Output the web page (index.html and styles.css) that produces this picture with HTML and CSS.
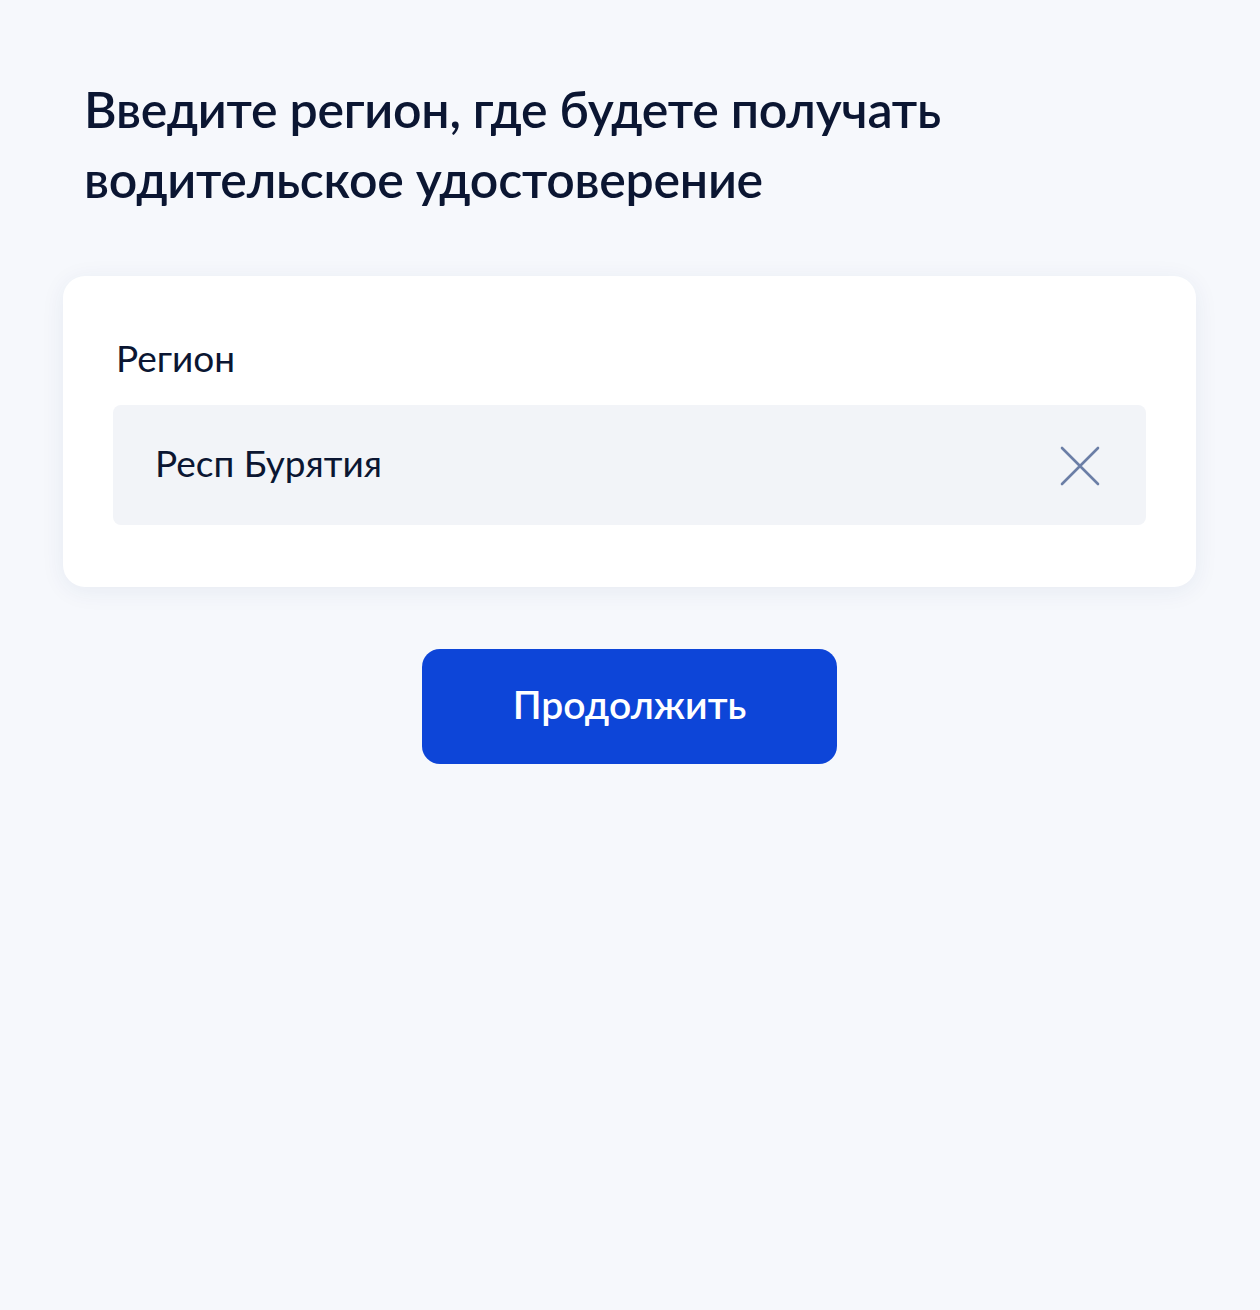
FILE: index.html
```html
<!DOCTYPE html>
<html lang="ru">
<head>
<meta charset="utf-8">
<link rel="stylesheet" href="styles.css">
</head>
<body>
<main class="page">
  <h1 class="title">Введите регион, где будете получать водительское удостоверение</h1>
  <section class="card">
    <div class="label">Регион</div>
    <div class="field">
      <span class="value">Респ Бурятия</span>
      <svg class="clear" width="40" height="40" viewBox="0 0 40 40" aria-hidden="true">
        <path d="M2 2 L38 38 M38 2 L2 38" stroke="#6b7ea6" stroke-width="2.6" stroke-linecap="round" fill="none"/>
      </svg>
    </div>
  </section>
  <div class="actions">
    <button class="btn">Продолжить</button>
  </div>
</main>
</body>
</html>
```

FILE: styles.css
```css
html, body {
  margin: 0;
  padding: 0;
  background: #f6f8fc;
}
body {
  font-family: Lato, "Noto Sans", sans-serif;
  color: #0b1632;
  height: 1310px;
}
.page {
  padding: 74px 64px 0 63px;
  width: 1133px;
}
.title {
  margin: 0 0 0 21px;
  font-size: 50px;
  line-height: 70px;
  font-weight: 600;
  letter-spacing: -0.25px;
  max-width: 880px;
}
.card {
  margin-top: 62px;
  background: #ffffff;
  border-radius: 22px;
  box-shadow: 0 4px 24px rgba(30, 50, 110, 0.07);
  padding: 58px 50px 62px 50px;
}
.label {
  font-size: 37px;
  line-height: 48px;
  margin-left: 3px;
  margin-bottom: 23px;
  color: #0b1632;
}
.field {
  background: #f2f4f8;
  border-radius: 8px;
  height: 120px;
  display: flex;
  align-items: center;
  justify-content: space-between;
  padding: 0 46px 0 42px;
}
.value {
  font-size: 37px;
  color: #0b1632;
  margin-bottom: 6px;
}
.clear {
  flex: none;
  margin-top: 2px;
}
.actions {
  display: flex;
  justify-content: center;
  margin-top: 62px;
}
.btn {
  width: 415px;
  height: 115px;
  border: none;
  border-radius: 18px;
  background: #0d45d8;
  color: #ffffff;
  font-family: Lato, "Noto Sans", sans-serif;
  font-size: 39px;
  font-weight: 600;
  padding: 0 0 6px 0;
}
```
